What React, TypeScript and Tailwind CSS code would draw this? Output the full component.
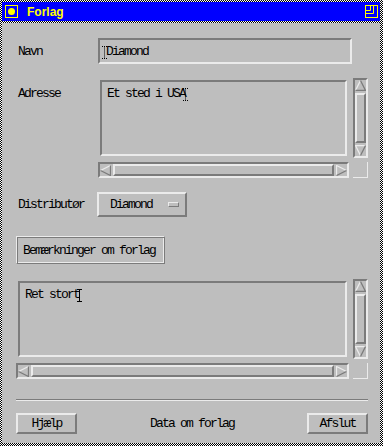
import React from "react";

const mono = "font-['Liberation_Mono',monospace] text-[13px] leading-[15px] tracking-[-1.8px] text-black";
const sunken =
  "border-2 border-t-[#7b7b7b] border-l-[#7b7b7b] border-b-[#ebebeb] border-r-[#ebebeb]";
const raised =
  "border-2 border-t-[#ebebeb] border-l-[#ebebeb] border-b-[#7b7b7b] border-r-[#7b7b7b]";

function Cursor({ dotted }: { dotted?: boolean }) {
  return (
    <svg width="5" height="13" viewBox="0 0 5 13" className="inline-block">
      <path
        d="M0 0.5H5M2.5 0.5V12.5M0 12.5H5"
        stroke="#000"
        strokeWidth="1"
        strokeDasharray={dotted ? "1 1" : undefined}
        fill="none"
      />
    </svg>
  );
}

// arrow glyphs for the scrollbars
function Arrow({ dir }: { dir: "up" | "down" | "left" | "right" }) {
  const light = "#ebebeb";
  const dark = "#7b7b7b";
  let l = "";
  let d = "";
  if (dir === "up") {
    l = "M0.5 10.5L5.5 0.5";
    d = "M5.5 0.5L10.5 10.5H0.5";
  } else if (dir === "down") {
    l = "M5.5 10.5L0.5 0.5H10.5";
    d = "M10.5 0.5L5.5 10.5";
  } else if (dir === "left") {
    l = "M0.5 5.5L10.5 0.5";
    d = "M0.5 5.5L10.5 10.5V0.5";
  } else {
    l = "M0.5 10.5V0.5L10.5 5.5";
    d = "M10.5 5.5L0.5 10.5";
  }
  return (
    <svg width="11" height="11" viewBox="0 0 11 11" className="block shrink-0">
      <path d={l} stroke={light} strokeWidth="1.3" fill="none" />
      <path d={d} stroke={dark} strokeWidth="1.3" fill="none" />
    </svg>
  );
}

function VScroll() {
  return (
    <div className={`w-[15px] h-full flex flex-col ${sunken}`}>
      <Arrow dir="up" />
      <div className={`flex-1 my-[2px] ${raised}`} />
      <Arrow dir="down" />
    </div>
  );
}

function HScroll() {
  return (
    <div className={`h-[16px] w-full flex items-center ${sunken}`}>
      <Arrow dir="left" />
      <div className={`flex-1 h-full mx-[2px] ${raised}`} />
      <Arrow dir="right" />
    </div>
  );
}

function ScrolledText({ width, children }: { width: number; children: React.ReactNode }) {
  return (
    <div className="grid gap-x-[4px] gap-y-[4px]" style={{ gridTemplateColumns: `${width}px 15px`, gridTemplateRows: "80px 16px" }}>
      <div className="p-[2px] h-full">
        <div className={`h-full pl-[5px] pt-[4px] ${sunken} ${mono}`}>{children}</div>
      </div>
      <VScroll />
      <HScroll />
      <div className="border-r border-b border-[#ebebeb]" />
    </div>
  );
}

export default function App() {
  return (
    <div className="w-[383px] h-[446px] flex flex-col gap-[2px] pt-[2px] pl-[2px] pr-[3px] pb-[3px] bg-[repeating-conic-gradient(#000_0%_25%,#fff_0%_50%)] bg-[length:2px_2px]">
      {/* title bar */}
      <div className="h-[19px] bg-[#0000ff] flex items-center pl-[3px] pr-[2px]">
        <svg width="13" height="13" viewBox="0 0 13 13">
          <rect x="0.5" y="0.5" width="12" height="12" stroke="#ffff00" fill="none" />
          <circle cx="6.5" cy="6.5" r="3.5" fill="#ffff00" />
        </svg>
        <span className="ml-[9px] font-['Liberation_Sans',sans-serif] font-bold text-[12px] text-[#ffff00] leading-none">
          Forlag
        </span>
        <svg width="13" height="13" viewBox="0 0 13 13" className="ml-auto">
          <rect x="0.5" y="0.5" width="12" height="12" stroke="#ffff00" fill="none" />
          <path d="M0.5 8.5H8.5V0.5" stroke="#ffff00" fill="none" />
          <path d="M0.5 5.5H5.5V0.5" stroke="#ffff00" fill="none" />
        </svg>
      </div>

      {/* body */}
      <div className={`flex-1 bg-[#bebebe] flex flex-col pl-[14px] pr-[12px] ${mono}`}>
        <div className="mt-[15px] flex items-center h-[26px]">
          <span className="w-[82px] pl-[2px]">Navn</span>
          <div className={`w-[254px] h-full flex items-center pl-[6px] ${sunken}`}>
            <span className="relative">
              <span className="absolute left-[-4px] top-[1px]">
                <Cursor dotted />
              </span>
              Diamond
            </span>
          </div>
        </div>

        <div className="mt-[14px] flex items-start">
          <span className="w-[82px] pl-[2px] pt-[8px]">Adresse</span>
          <ScrolledText width={251}>
            <span className="inline-flex items-start">
              Et sted i USA
              <span className="ml-[-2px] mt-[1px]">
                <Cursor dotted />
              </span>
            </span>
          </ScrolledText>
        </div>

        <div className="mt-[14px] flex items-center h-[25px]">
          <span className="w-[81px] pl-[2px]">Distributør</span>
          <div className={`w-[90px] h-full flex items-center justify-between pl-[11px] pr-[6px] ${raised}`}>
            <span>Diamond</span>
            <span className="w-[11px] h-[5px] border border-t-[#ebebeb] border-l-[#ebebeb] border-b-[#7b7b7b] border-r-[#7b7b7b]" />
          </div>
        </div>

        <div
          className="mt-[19px] w-[149px] h-[28px] flex items-center pl-[6px] border border-t-[#ebebeb] border-l-[#ebebeb] border-b-[#7b7b7b] border-r-[#7b7b7b] shadow-[inset_1px_1px_0_#7b7b7b,inset_-1px_-1px_0_#ebebeb]"
        >
          Bemærkninger om forlag
        </div>

        <div className="mt-[15px]">
          <ScrolledText width={333}>
            <span className="inline-flex items-start">
              Ret stort
              <span className="ml-[-2px] mt-[1px]">
                <Cursor />
              </span>
            </span>
          </ScrolledText>
        </div>

        <div className="mt-[20px] h-[2px] border-t border-t-[#7b7b7b] border-b border-b-[#ebebeb]" />

        <div className="mt-[12px] h-[21px] flex items-center justify-between">
          <div className={`w-[61px] h-full flex items-center justify-center ${raised}`}>Hjælp</div>
          <span>Data om forlag</span>
          <div className={`w-[61px] h-full flex items-center justify-center ${raised}`}>Afslut</div>
        </div>
      </div>
    </div>
  );
}
